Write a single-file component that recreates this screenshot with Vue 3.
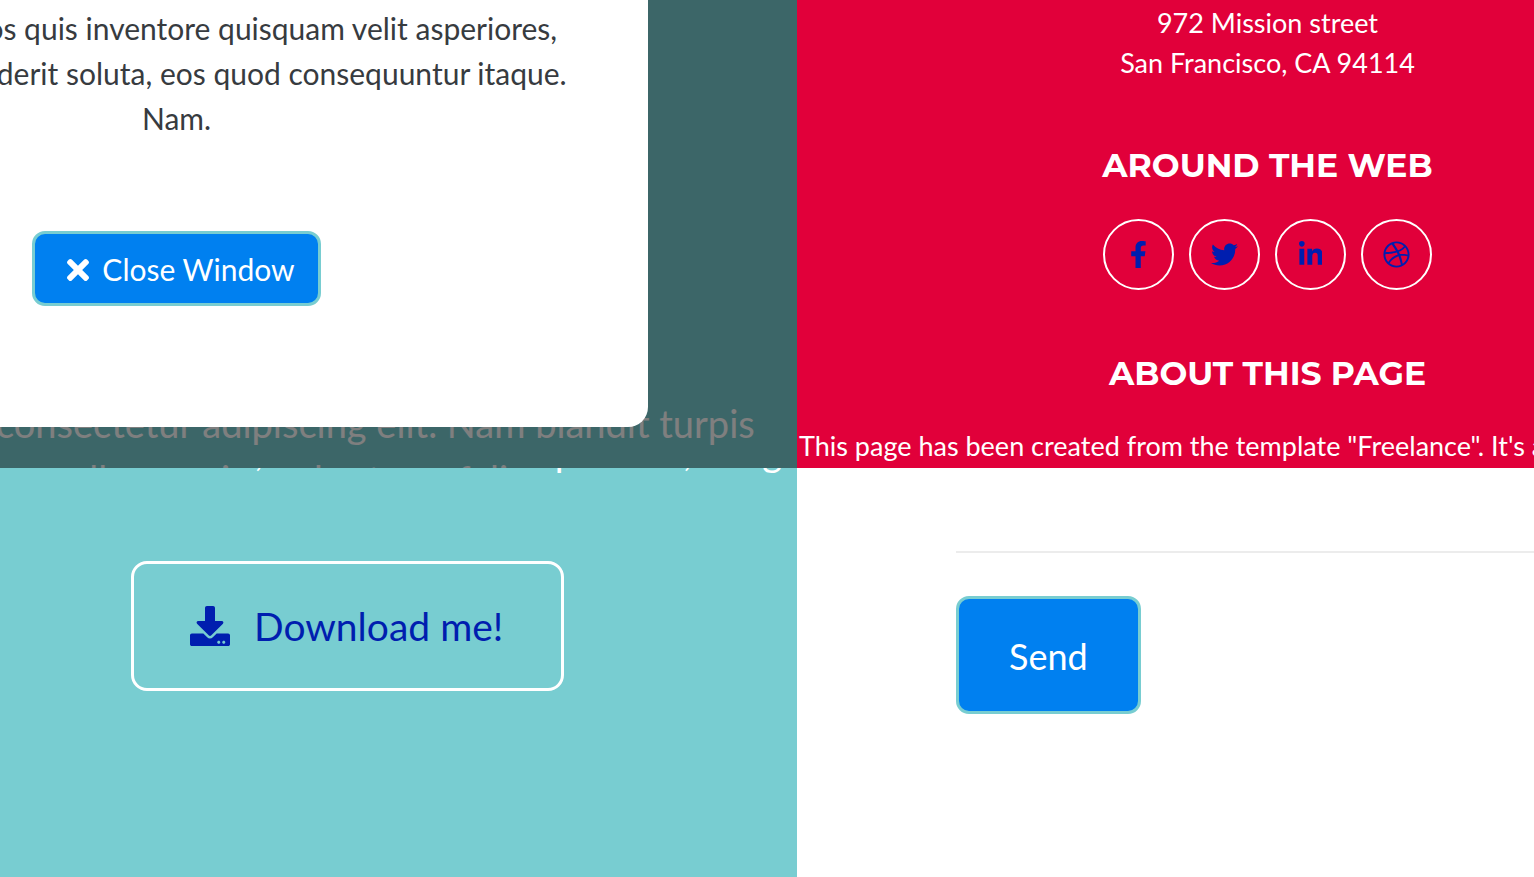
<script setup>
const socials = [
  { name: 'Facebook', box: '0 0 320 512', d: 'M279.14 288l14.22-92.66h-88.91v-60.13c0-25.35 12.42-50.06 52.24-50.06h40.42V6.26S260.43 0 225.36 0c-73.22 0-121.08 44.38-121.08 124.72v70.62H22.89V288h81.39v224h100.17V288z' },
  { name: 'Twitter', box: '0 0 512 512', d: 'M459.37 151.716c.325 4.548.325 9.097.325 13.645 0 138.72-105.583 298.558-298.558 298.558-59.452 0-114.68-17.219-161.137-47.106 8.447.974 16.568 1.299 25.34 1.299 49.055 0 94.213-16.568 130.274-44.832-46.132-.975-84.792-31.188-98.112-72.772 6.498.974 12.995 1.624 19.818 1.624 9.421 0 18.843-1.3 27.614-3.573-48.081-9.747-84.143-51.98-84.143-102.985v-1.299c13.969 7.797 30.214 12.67 47.431 13.319-28.264-18.843-46.781-51.005-46.781-87.391 0-19.492 5.197-37.36 14.294-52.954 51.655 63.675 129.3 105.258 216.365 109.807-1.624-7.797-2.599-15.918-2.599-24.04 0-57.828 46.782-104.934 104.934-104.934 30.213 0 57.502 12.67 76.67 33.137 23.715-4.548 46.456-13.32 66.599-25.34-7.798 24.366-24.366 44.833-46.132 57.827 21.117-2.273 41.584-8.122 60.426-16.243-14.292 20.791-32.161 39.308-52.628 54.253z' },
  { name: 'LinkedIn', box: '0 0 448 512', d: 'M100.28 448H7.4V148.9h92.88zM53.79 108.1C24.09 108.1 0 83.5 0 53.8a53.79 53.79 0 0 1 107.58 0c0 29.7-24.1 54.3-53.79 54.3zM447.9 448h-92.68V302.4c0-34.7-.7-79.2-48.29-79.2-48.29 0-55.69 37.7-55.69 76.7V448h-92.78V148.9h89.08v40.8h1.3c12.4-23.5 42.69-48.3 87.88-48.3 94 0 111.28 61.9 111.28 142.3V448z' },
  { name: 'Dribbble', box: '0 0 512 512', d: 'M256 8C119.252 8 8 119.252 8 256s111.252 248 248 248 248-111.252 248-248S392.748 8 256 8zm163.97 114.366c29.503 36.046 47.369 81.957 47.835 131.955-6.984-1.477-77.018-15.682-147.502-6.818-5.752-14.041-11.181-26.393-18.617-41.614 78.321-31.977 113.818-77.482 118.284-83.523zM396.421 97.87c-3.81 5.427-35.697 48.286-111.021 76.519-34.712-63.776-73.185-116.168-79.04-124.008 67.176-16.193 137.966 1.27 190.061 47.489zm-230.48-33.25c5.585 7.659 43.438 60.116 78.537 122.509-99.087 26.313-186.36 25.934-195.834 25.809C62.38 147.205 106.678 92.573 165.941 64.62zM44.17 256.323c0-2.166.043-4.322.108-6.473 9.268.19 111.92 1.513 217.706-30.146 6.064 11.868 11.857 23.915 17.174 35.949-76.599 21.575-146.194 83.527-180.531 142.306C64.794 360.405 44.17 310.73 44.17 256.323zm81.807 167.113c22.127-45.233 82.178-103.622 167.579-132.756 29.74 77.283 42.039 142.053 45.189 160.638-68.112 29.013-150.015 21.053-212.768-27.882zm248.38 8.489c-2.171-12.886-13.446-74.897-41.152-151.033 66.38-10.626 124.7 6.768 131.947 9.055-9.442 58.941-43.273 109.844-90.795 141.978z' },
]
</script>

<template>
  <main class="board">
    <section class="panel modal-panel">
      <p class="lead">consectetur adipiscing elit. Nam blandit turpis<br />eu nulla mauris, sed rutrum felis quam ex, cong</p>
      <div class="backdrop"></div>
      <div class="modal" role="dialog" aria-label="Project details">
        <p class="modal-text">
          <span>recusandae quos quis inventore quisquam velit asperiores,</span>
          <span>vitae? Reprehenderit soluta, eos quod consequuntur itaque.</span>
          <span>Nam.</span>
        </p>
        <button class="btn close" type="button">
          <svg viewBox="0 0 352 512" aria-hidden="true"><path fill="currentColor" d="M242.72 256l100.07-100.07c12.28-12.28 12.28-32.19 0-44.48l-22.24-22.24c-12.28-12.28-32.19-12.28-44.48 0L176 189.28 75.93 89.21c-12.28-12.28-32.19-12.28-44.48 0L9.21 111.45c-12.28 12.28-12.28 32.19 0 44.48L109.28 256 9.21 356.07c-12.28 12.28-12.28 32.19 0 44.48l22.24 22.24c12.28 12.28 32.2 12.28 44.48 0L176 322.72l100.07 100.07c12.28 12.28 32.2 12.28 44.48 0l22.24-22.24c12.28-12.28 12.28-32.19 0-44.48L242.72 256z" /></svg>
          Close Window
        </button>
      </div>
    </section>

    <footer class="panel footer">
      <div class="column">
        <p class="address">972 Mission street<br />San Francisco, CA 94114</p>
        <h4>Around the Web</h4>
        <nav class="socials" aria-label="Social links">
          <a v-for="s in socials" :key="s.name" href="#" :aria-label="s.name">
            <svg :viewBox="s.box" aria-hidden="true"><path fill="currentColor" :d="s.d" /></svg>
          </a>
        </nav>
        <h4>About this page</h4>
      </div>
      <p class="about">This page has been created from the template "Freelance". It's a</p>
    </footer>

    <section class="panel download-panel">
      <p class="lead tail">eu nulla mauris, sed rutrum felis quam ex, cong</p>
      <a class="download" href="#">
        <svg viewBox="0 0 512 512" aria-hidden="true"><path fill="currentColor" d="M216 0h80c13.300 0 24 10.700 24 24v168h87.700c17.800 0 26.700 21.500 14.100 34.100L269.700 378.300c-7.500 7.500-19.800 7.500-27.300 0L90.100 226.100c-12.600-12.600-3.700-34.100 14.100-34.100H192V24c0-13.300 10.700-24 24-24zm296 376v112c0 13.300-10.700 24-24 24H24c-13.300 0-24-10.700-24-24V376c0-13.300 10.700-24 24-24h146.700l49 49c20.100 20.100 52.500 20.100 72.600 0l49-49H488c13.300 0 24 10.700 24 24zm-124 88c0-11-9-20-20-20s-20 9-20 20 9 20 20 20 20-9 20-20zm64 0c0-11-9-20-20-20s-20 9-20 20 9 20 20 20 20-9 20-20z" /></svg>
        Download me!
      </a>
    </section>

    <section class="panel send-panel">
      <hr />
      <button class="btn send" type="submit">Send</button>
    </section>
  </main>
</template>

<style>
body {
  margin: 0;
}
</style>

<style scoped>
.board {
  display: grid;
  grid-template-columns: 797fr 737fr;
  grid-template-rows: 468fr 409fr;
  min-height: 100vh;
  font-family: Lato, "Liberation Sans", sans-serif;
  color: #fff;
}
.panel {
  position: relative;
  box-sizing: border-box;
  min-width: 0;
  overflow: hidden;
}
p, h4 {
  margin: 0;
}
.modal-panel, .download-panel {
  background: #78cdd1;
}
.lead {
  font-size: 38px;
  line-height: 56px;
  white-space: nowrap;
}
.modal-panel .lead {
  position: absolute;
  top: 395px;
  left: -4px;
}
.backdrop {
  position: absolute;
  inset: 0;
  background: rgba(0, 0, 0, 0.5);
}
.modal {
  position: absolute;
  top: 0;
  right: 149px;
  left: -295px;
  display: flex;
  flex-direction: column;
  align-items: center;
  box-sizing: border-box;
  padding: 6px 0 121px;
  border-radius: 0 0 20px 20px;
  background: #fff;
}
.modal-text {
  color: #373b3f;
  font-size: 30px;
  line-height: 45px;
  text-align: center;
}
.modal-text span {
  display: block;
  white-space: nowrap;
}
.btn {
  box-sizing: border-box;
  border: 3px solid #78cdd1;
  border-radius: 13px;
  background: #0080f0;
  color: #fff;
  font-family: inherit;
}
.close {
  display: flex;
  align-items: center;
  gap: 13px;
  margin-top: 90px;
  padding: 13px 23px 11px 32px;
  font-size: 30px;
  line-height: 45px;
}
.close svg {
  width: 22px;
  height: 32px;
}
.footer {
  padding: 3px 0 0 2px;
  background: #e1003a;
  font-size: 27px;
  line-height: 40px;
}
.column {
  margin-right: -202px;
  text-align: center;
}
.footer h4 {
  font-family: Montserrat, Inter, sans-serif;
  font-size: 33px;
  font-weight: 700;
  line-height: 40px;
  text-transform: uppercase;
}
.address + h4 {
  margin-top: 62px;
}
.socials {
  display: flex;
  justify-content: center;
  gap: 15px;
  margin: 34px 0 63px;
}
.socials a {
  display: flex;
  align-items: center;
  justify-content: center;
  box-sizing: border-box;
  width: 71px;
  height: 71px;
  border: 2px solid #fff;
  border-radius: 50%;
  color: #001eaf;
}
.socials svg {
  height: 27px;
}
.about {
  margin-top: 33px;
  white-space: nowrap;
}
.download-panel {
  display: flex;
  flex-direction: column;
}
.tail {
  margin: -45px 0 82px 4px;
}
.download {
  display: flex;
  align-items: center;
  align-self: flex-start;
  gap: 24px;
  box-sizing: border-box;
  height: 130px;
  margin-left: 131px;
  padding: 0 58px 0 56px;
  border: 3px solid #fff;
  border-radius: 16px;
  color: #001eaf;
  font-size: 39px;
  text-decoration: none;
}
.download svg {
  width: 40px;
  height: 40px;
}
.send-panel {
  padding: 83px 0 0 159px;
  background: #fff;
}
hr {
  height: 2px;
  margin: 0 0 43px;
  border: 0;
  background: #ececec;
}
.send {
  padding: 30px 50px 28px;
  font-size: 36px;
  line-height: 54px;
}
</style>
